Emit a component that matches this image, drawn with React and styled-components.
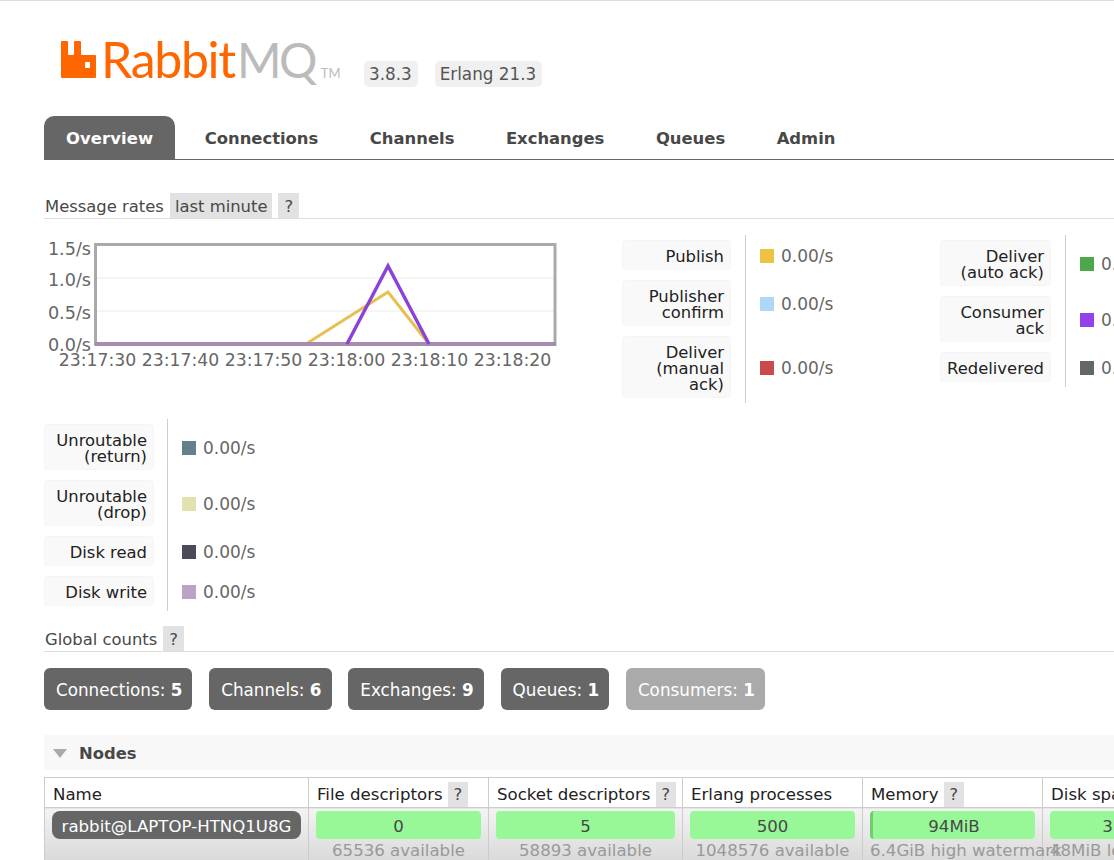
import styled, { createGlobalStyle } from "styled-components";

const GlobalStyle = createGlobalStyle`
	html, body {
		margin: 0;
		height: 860px;
		overflow: hidden;
		background: #fff;
	}
	body {
		font-family: "DejaVu Sans", Verdana, sans-serif;
		font-size: 16.4px;
		line-height: 16px;
		color: #484848;
	}
`;

const tabs = ["Overview", "Connections", "Channels", "Exchanges", "Queues", "Admin"];

const legendOne = [
	{ label: ["Publish"], color: "#edc240" },
	{ label: ["Publisher", "confirm"], color: "#afd8f8" },
	{ label: ["Deliver", "(manual", "ack)"], color: "#cb4b4b" },
];
const legendTwo = [
	{ label: ["Deliver", "(auto ack)"], color: "#4da74d" },
	{ label: ["Consumer", "ack"], color: "#9440ed" },
	{ label: ["Redelivered"], color: "#666666" },
];
const legendThree = [
	{ label: ["Unroutable", "(return)"], color: "#647f8e" },
	{ label: ["Unroutable", "(drop)"], color: "#e3e2ae" },
	{ label: ["Disk read"], color: "#4a4a5a" },
	{ label: ["Disk write"], color: "#bba3c6" },
];

const counts = [
	{ label: "Connections", value: 5 },
	{ label: "Channels", value: 6 },
	{ label: "Exchanges", value: 9 },
	{ label: "Queues", value: 1 },
	{ label: "Consumers", value: 1, muted: true },
];

const times = ["23:17:30", "23:17:40", "23:17:50", "23:18:00", "23:18:10", "23:18:20"];

function RateChart() {
	return (
		<ChartSvg width="578" height="150" viewBox="0 0 578 150">
			{[
				["1.5/s", 14],
				["1.0/s", 45],
				["0.5/s", 78],
				["0.0/s", 110],
			].map(([text, y]) => (
				<text key={text} x="47" y={y + 6} textAnchor="end" fontSize="17.6" fill="#666">
					{text}
				</text>
			))}
			<line x1="52" y1="43" x2="511" y2="43" stroke="#f5f5f5" strokeWidth="2" />
			<line x1="52" y1="76" x2="511" y2="76" stroke="#f5f5f5" strokeWidth="2" />
			<rect x="51.5" y="9.5" width="459.5" height="100" fill="none" stroke="#aaa" strokeWidth="3" />
			<polyline points="262,109 344,57 385,109" fill="none" stroke="#e8c050" strokeWidth="3" />
			<line x1="51" y1="109" x2="512" y2="109" stroke="#a68cb0" strokeWidth="4" />
			<polyline points="303,109 344,31 385,109" fill="none" stroke="#8a42d8" strokeWidth="3.4" />
			{times.map((t, i) => (
				<text key={t} x={53.5 + i * 83} y="131" textAnchor="middle" fontSize="17.3" fill="#666">
					{t}
				</text>
			))}
		</ChartSvg>
	);
}

function Legend({ rows, width, labelWidth, labelGap }) {
	return (
		<LegendTable $width={width}>
			{rows.map((row) => (
				<LegendRow key={row.label[0] + row.color}>
					<LegendLabel $width={labelWidth} $gap={labelGap}>
						{row.label.map((line) => (
							<span key={line}>{line}</span>
						))}
					</LegendLabel>
					<LegendValue>
						<Swatch $color={row.color} />
						0.00/s
					</LegendValue>
				</LegendRow>
			))}
		</LegendTable>
	);
}

function LogoMark() {
	return (
		<svg width="36" height="37" viewBox="0 0 36 37" fill="#f60">
			<path
				fillRule="evenodd"
				d="M1 0h5a1 1 0 0 1 1 1v12a1 1 0 0 0 1 1h4a1 1 0 0 0 1-1V1a1 1 0 0 1 1-1h5a1 1 0 0 1 1 1v12a1 1 0 0 0 1 1h13a1 1 0 0 1 1 1v21a1 1 0 0 1-1 1H1a1 1 0 0 1-1-1V1a1 1 0 0 1 1-1zM25 21a1 1 0 0 0-1 1v4a1 1 0 0 0 1 1h3a1 1 0 0 0 1-1v-4a1 1 0 0 0-1-1z"
			/>
		</svg>
	);
}

export default function App() {
	return (
		<Page>
			<GlobalStyle />
			<Header>
				<Logo>
					<LogoMark />
					<LogoText>
						Rabbit<LogoGrey>MQ</LogoGrey>
						<LogoTm>TM</LogoTm>
					</LogoText>
				</Logo>
				<VersionTag>3.8.3</VersionTag>
				<VersionTag>Erlang 21.3</VersionTag>
			</Header>

			<TabBar>
				{tabs.map((tab, i) => (
					<Tab key={tab} $active={i === 0}>
						{tab}
					</Tab>
				))}
			</TabBar>

			<RatesHeading>
				Message rates
				<HeadingTag>last minute</HeadingTag>
				<HeadingTag $help>?</HeadingTag>
			</RatesHeading>

			<RatesRow>
				<RateChart />
				<Legend rows={legendOne} width={318} labelWidth={109} labelGap={14} />
				<Legend rows={legendTwo} width={300} labelWidth={111} labelGap={14} />
			</RatesRow>
			<LowerLegend>
				<Legend rows={legendThree} width={318} labelWidth={110} labelGap={13} />
			</LowerLegend>

			<CountsHeading>
				Global counts
				<HeadingTag $help>?</HeadingTag>
			</CountsHeading>
			<Counts>
				{counts.map((c) => (
					<CountBadge key={c.label} $muted={c.muted}>
						{c.label}: <b>{c.value}</b>
					</CountBadge>
				))}
			</Counts>

			<NodesBar>
				<Triangle />
				Nodes
			</NodesBar>

			<NodesTable>
				<thead>
					<tr>
						<Th $w={264}>Name</Th>
						<Th $w={180}>
							File descriptors <Help>?</Help>
						</Th>
						<Th $w={194}>
							Socket descriptors <Help>?</Help>
						</Th>
						<Th $w={180}>Erlang processes</Th>
						<Th $w={180}>
							Memory <Help>?</Help>
						</Th>
						<Th $w={180}>
							Disk space <Help>?</Help>
						</Th>
					</tr>
				</thead>
				<tbody>
					<tr>
						<Td>
							<NodeName>rabbit@LAPTOP-HTNQ1U8G</NodeName>
						</Td>
						<Td>
							<Bar>0</Bar>
							<Sub $center>65536 available</Sub>
						</Td>
						<Td>
							<Bar>5</Bar>
							<Sub $center>58893 available</Sub>
						</Td>
						<Td>
							<Bar>500</Bar>
							<Sub $center>1048576 available</Sub>
						</Td>
						<Td>
							<Bar $used>94MiB</Bar>
							<Sub>6.4GiB high watermark</Sub>
						</Td>
						<Td>
							<Bar>318GiB</Bar>
							<Sub>48MiB low watermark</Sub>
						</Td>
					</tr>
				</tbody>
			</NodesTable>
		</Page>
	);
}

const Page = styled.div`
	box-sizing: border-box;
	width: 1400px;
	height: 860px;
	padding: 0 0 0 44px;
	border-top: 1px solid #ddd;
	overflow: hidden;
`;

const Header = styled.div`
	display: flex;
	align-items: flex-start;
	height: 115px;
`;

const Logo = styled.div`
	display: flex;
	align-items: flex-start;
	width: 303px;
	padding: 40px 0 0 17px;
	box-sizing: border-box;
	flex: none;
	margin-right: 17px;
`;

const LogoText = styled.div`
	margin: -12px 0 0 4px;
	font-family: Lato, "Liberation Sans", sans-serif;
	font-weight: 400;
	font-size: 50px;
	line-height: 61px;
	letter-spacing: -1.3px;
	color: #f60;
	white-space: nowrap;
`;

const LogoGrey = styled.span`
	margin-left: 2px;
	font-size: 48px;
	letter-spacing: -2.6px;
	color: #bbb;
`;

const LogoTm = styled.span`
	margin-left: 6px;
	font-size: 13px;
	letter-spacing: 0;
	color: #bbb;
`;

const VersionTag = styled.span`
	margin: 60px 17px 0 0;
	padding: 5px 6px 5px 5px;
	border-radius: 5px;
	background: #f0f0f0;
	color: #555;
	font-size: 16.8px;
`;

const TabBar = styled.div`
	display: flex;
	gap: 7.5px;
	height: 43px;
	border-bottom: 1px solid #666;
`;

const Tab = styled.div`
	padding: 15px 22px 0;
	border-radius: 10px 10px 0 0;
	font-size: 16.4px;
	font-weight: 700;
	letter-spacing: ${(p) => (p.$active ? "0.1px" : "0")};
	color: ${(p) => (p.$active ? "#fff" : "#484848")};
	background: ${(p) => (p.$active ? "#666" : "transparent")};
`;

const Heading = styled.div`
	display: flex;
	align-items: center;
	gap: 6px;
	height: 23px;
	padding: 3px 0 0 1px;
	border-bottom: 1px solid #ddd;
	color: #484848;
`;

const RatesHeading = styled(Heading)`
	margin-top: 32px;
`;

const CountsHeading = styled(Heading)`
	margin-top: 14px;
`;

const HeadingTag = styled.span`
	display: flex;
	align-items: center;
	box-sizing: border-box;
	height: 25px;
	margin-top: -3px;
	padding: 3px ${(p) => (p.$help ? "6px" : "5px")} 0;
	background: #e2e2e2;
`;

const Help = styled.span`
	display: inline-block;
	box-sizing: border-box;
	width: 20px;
	padding: 5px 0 4px;
	line-height: 16px;
	text-align: center;
	background: #e2e2e2;
	color: #484848;
`;

const RatesRow = styled.div`
	display: flex;
	align-items: flex-start;
	margin-top: 16px;
`;

const ChartSvg = styled.svg`
	display: block;
	flex: none;
`;

const LegendTable = styled.div`
	flex: none;
	width: ${(p) => p.$width}px;
`;

const LegendRow = styled.div`
	display: flex;
	align-items: stretch;
`;

const LegendLabel = styled.div`
	display: flex;
	flex-direction: column;
	flex: none;
	box-sizing: border-box;
	width: ${(p) => p.$width}px;
	margin: 5px ${(p) => p.$gap}px 5px 0;
	padding: 8px 6px 4px;
	border: 1px solid #f5f5f5;
	border-radius: 4px;
	background: #f9f9f9;
	color: #222;
	text-align: right;
`;

const LegendValue = styled.div`
	display: flex;
	align-items: center;
	gap: 7px;
	padding: 2px 0 0 14px;
	border-left: 1px solid #ccc;
	font-size: 17px;
	color: #666;
`;

const Swatch = styled.span`
	display: block;
	width: 14px;
	height: 14px;
	background: ${(p) => p.$color};
`;

const LowerLegend = styled.div`
	margin-top: 16px;
`;

const Counts = styled.div`
	display: flex;
	gap: 16.8px;
	margin-top: 16px;
`;

const CountBadge = styled.div`
	display: flex;
	align-items: center;
	box-sizing: border-box;
	white-space: pre;
	height: 42px;
	padding: 2px 10px 0 12px;
	border-radius: 6px;
	font-size: 16.8px;
	background: ${(p) => (p.$muted ? "#aaa" : "#666")};
	color: #fff;
`;

const NodesBar = styled.div`
	display: flex;
	align-items: center;
	box-sizing: border-box;
	height: 35px;
	margin-top: 25px;
	padding: 2px 0 0 9px;
	background: #f8f8f8;
	font-size: 16.4px;
	font-weight: 700;
`;

const Triangle = styled.span`
	width: 0;
	height: 0;
	margin-right: 12px;
	border-style: solid;
	border-width: 9px 7.5px 0;
	border-color: #aaa transparent transparent;
`;

const NodesTable = styled.table`
	margin-top: 7px;
	border-collapse: collapse;
	table-layout: fixed;
	width: 1178px;
	font-size: 16.6px;
`;

const Th = styled.th`
	box-sizing: border-box;
	width: ${(p) => p.$w}px;
	height: 30px;
	padding: 3px 8px 0;
	border: 1px solid #ccc;
	font-weight: 400;
	line-height: 25px;
	text-align: left;
	color: #222;
	white-space: nowrap;
`;

const Td = styled.td`
	padding: 3px 7px 0;
	height: 52px;
	vertical-align: top;
	border: 1px solid #ccc;
	border-bottom: 0;
	background: linear-gradient(#f4f4f4, #d8d8d8);
`;

const NodeName = styled.div`
	display: flex;
	align-items: center;
	justify-content: center;
	box-sizing: border-box;
	height: 28px;
	padding-top: 3px;
	border-radius: 8px;
	background: #666;
	color: #fff;
	white-space: nowrap;
`;

const Bar = styled.div`
	display: flex;
	align-items: center;
	justify-content: center;
	box-sizing: border-box;
	height: 28px;
	padding-top: 3px;
	border-radius: 4px;
	background: #98f898;
	border-left: ${(p) => (p.$used ? "3px solid #6fce6f" : "0")};
	color: #484848;
`;

const Sub = styled.div`
	margin-top: 4px;
	color: #999;
	white-space: nowrap;
	text-align: ${(p) => (p.$center ? "center" : "left")};
`;
